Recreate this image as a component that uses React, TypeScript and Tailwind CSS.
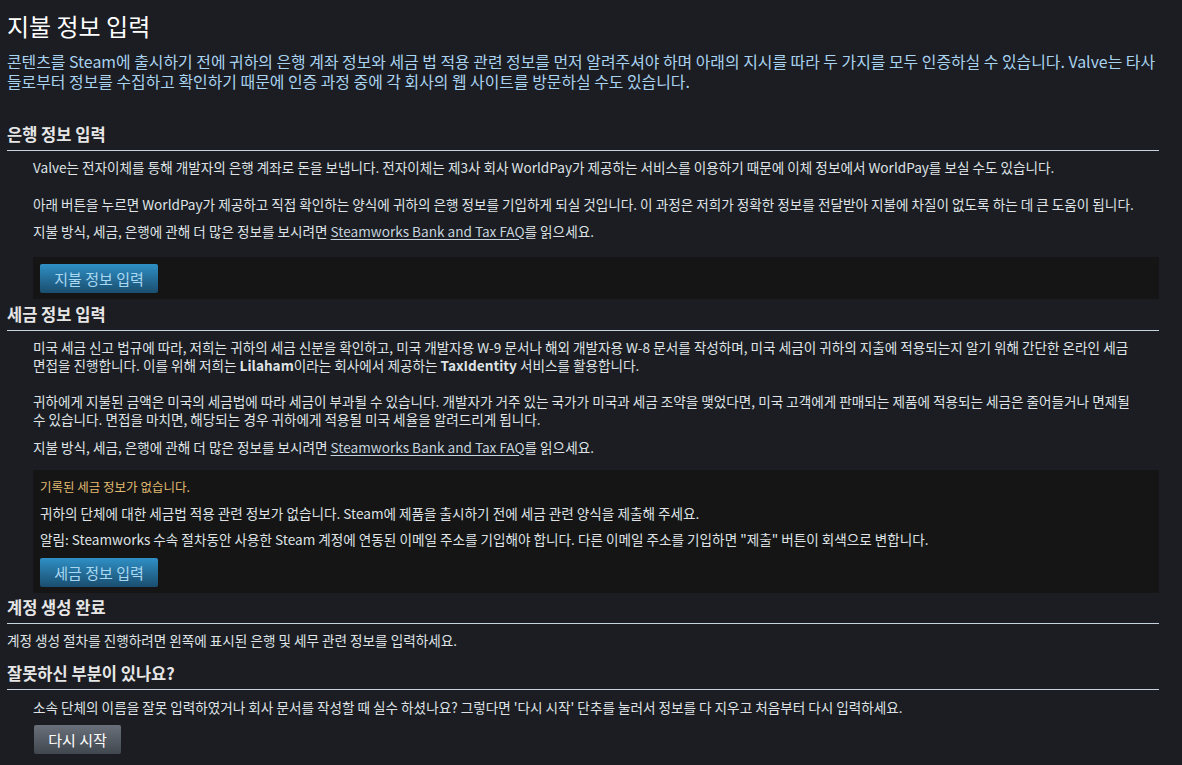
import React from 'react';

const FONT = { fontFamily: '"Noto Sans CJK KR", "Liberation Sans", sans-serif' };

function SectionHeading({ children }: { children: React.ReactNode }) {
  return (
    <h2 className="text-[16.5px] font-bold leading-[20px] text-[#e6e6e6] pb-[6px] border-b border-[#c6d4df]">
      {children}
    </h2>
  );
}

function FaqLink() {
  return (
    <a href="#" className="underline text-[#c6d4df] underline-offset-2">
      Steamworks Bank and Tax FAQ
    </a>
  );
}

function BlueButton({ label }: { label: string }) {
  return (
    <button className="h-[29px] w-[118px] rounded-[2px] bg-gradient-to-b from-[#2f90c6] to-[#1a4e6f] text-[15px] text-[#a9d8f3] leading-[29px]">
      {label}
    </button>
  );
}

export default function App() {
  return (
    <div style={FONT} className="min-h-[765px] bg-[#1b1d22] text-[13.6px] text-[#dfe3e6] px-[7px] pr-[23px] pt-[10px] pb-[8px] break-keep">
      <h1 className="text-[24px] leading-[32px] text-white">지불 정보 입력</h1>
      <p className="mt-[10px] text-[15.9px] leading-[20px] text-[#a9d2ef]">
        콘텐츠를 Steam에 출시하기 전에 귀하의 은행 계좌 정보와 세금 법 적용 관련 정보를 먼저 알려주셔야 하며 아래의 지시를 따라 두 가지를 모두 인증하실 수 있습니다. Valve는 타사 들로부터 정보를 수집하고 확인하기 때문에 인증 과정 중에 각 회사의 웹 사이트를 방문하실 수도 있습니다.
      </p>

      {/* Bank section */}
      <div className="mt-[32px]">
        <SectionHeading>은행 정보 입력</SectionHeading>
        <div className="pl-[26px] pt-[7px] leading-[18px]">
          <p className="mb-[19px]">
            Valve는 전자이체를 통해 개발자의 은행 계좌로 돈을 보냅니다. 전자이체는 제3사 회사 WorldPay가 제공하는 서비스를 이용하기 때문에 이체 정보에서 WorldPay를 보실 수도 있습니다.
          </p>
          <p className="mb-[9px]">
            아래 버튼을 누르면 WorldPay가 제공하고 직접 확인하는 양식에 귀하의 은행 정보를 기입하게 되실 것입니다. 이 과정은 저희가 정확한 정보를 전달받아 지불에 차질이 없도록 하는 데 큰 도움이 됩니다.
          </p>
          <p>
            지불 방식, 세금, 은행에 관해 더 많은 정보를 보시려면 <FaqLink />를 읽으세요.
          </p>
          <div className="mt-[17px] flex h-[42px] items-start bg-[#151515] px-[7px] pt-[7px]">
            <BlueButton label="지불 정보 입력" />
          </div>
        </div>
      </div>

      {/* Tax section */}
      <div className="mt-[5px]">
        <SectionHeading>세금 정보 입력</SectionHeading>
        <div className="pl-[26px] pt-[7px] leading-[18px]">
          <p className="mb-[18px]">
            미국 세금 신고 법규에 따라, 저희는 귀하의 세금 신분을 확인하고, 미국 개발자용 W-9 문서나 해외 개발자용 W-8 문서를 작성하며, 미국 세금이 귀하의 지출에 적용되는지 알기 위해 간단한 온라인 세금 면접을 진행합니다. 이를 위해 저희는 <b>Lilaham</b>이라는 회사에서 제공하는 <b>TaxIdentity</b> 서비스를 활용합니다.
          </p>
          <p className="mb-[10px] pr-[18px]">
            귀하에게 지불된 금액은 미국의 세금법에 따라 세금이 부과될 수 있습니다. 개발자가 거주 있는 국가가 미국과 세금 조약을 맺었다면, 미국 고객에게 판매되는 제품에 적용되는 세금은 줄어들거나 면제될 수 있습니다. 면접을 마치면, 해당되는 경우 귀하에게 적용될 미국 세율을 알려드리게 됩니다.
          </p>
          <p>
            지불 방식, 세금, 은행에 관해 더 많은 정보를 보시려면 <FaqLink />를 읽으세요.
          </p>
          <div className="mt-[14px] bg-[#151515] px-[7px] pt-[8px] pb-[6px]">
            <p className="text-[12.5px] text-[#e0bb72]">기록된 세금 정보가 없습니다.</p>
            <p className="mt-[8px]">
              귀하의 단체에 대한 세금법 적용 관련 정보가 없습니다. Steam에 제품을 출시하기 전에 세금 관련 양식을 제출해 주세요.
            </p>
            <p className="mt-[8px]">
              알림: Steamworks 수속 절차동안 사용한 Steam 계정에 연동된 이메일 주소를 기입해야 합니다. 다른 이메일 주소를 기입하면 "제출" 버튼이 회색으로 변합니다.
            </p>
            <div className="mt-[10px] flex">
              <BlueButton label="세금 정보 입력" />
            </div>
          </div>
        </div>
      </div>

      {/* Account complete */}
      <div className="mt-[4px]">
        <SectionHeading>계정 생성 완료</SectionHeading>
        <p className="pt-[7px] leading-[18px]">
          계정 생성 절차를 진행하려면 왼쪽에 표시된 은행 및 세무 관련 정보를 입력하세요.
        </p>
      </div>

      {/* Restart */}
      <div className="mt-[14px]">
        <SectionHeading>잘못하신 부분이 있나요?</SectionHeading>
        <div className="pl-[26px] pt-[8px] leading-[18px]">
          <p>
            소속 단체의 이름을 잘못 입력하였거나 회사 문서를 작성할 때 실수 하셨나요? 그렇다면 '다시 시작' 단추를 눌러서 정보를 다 지우고 처음부터 다시 입력하세요.
          </p>
          <button className="mt-[9px] ml-[1px] h-[29px] w-[87px] rounded-[2px] bg-gradient-to-b from-[#6b717a] to-[#41474f] text-[15px] text-white leading-[29px]">
            다시 시작
          </button>
        </div>
      </div>
    </div>
  );
}
